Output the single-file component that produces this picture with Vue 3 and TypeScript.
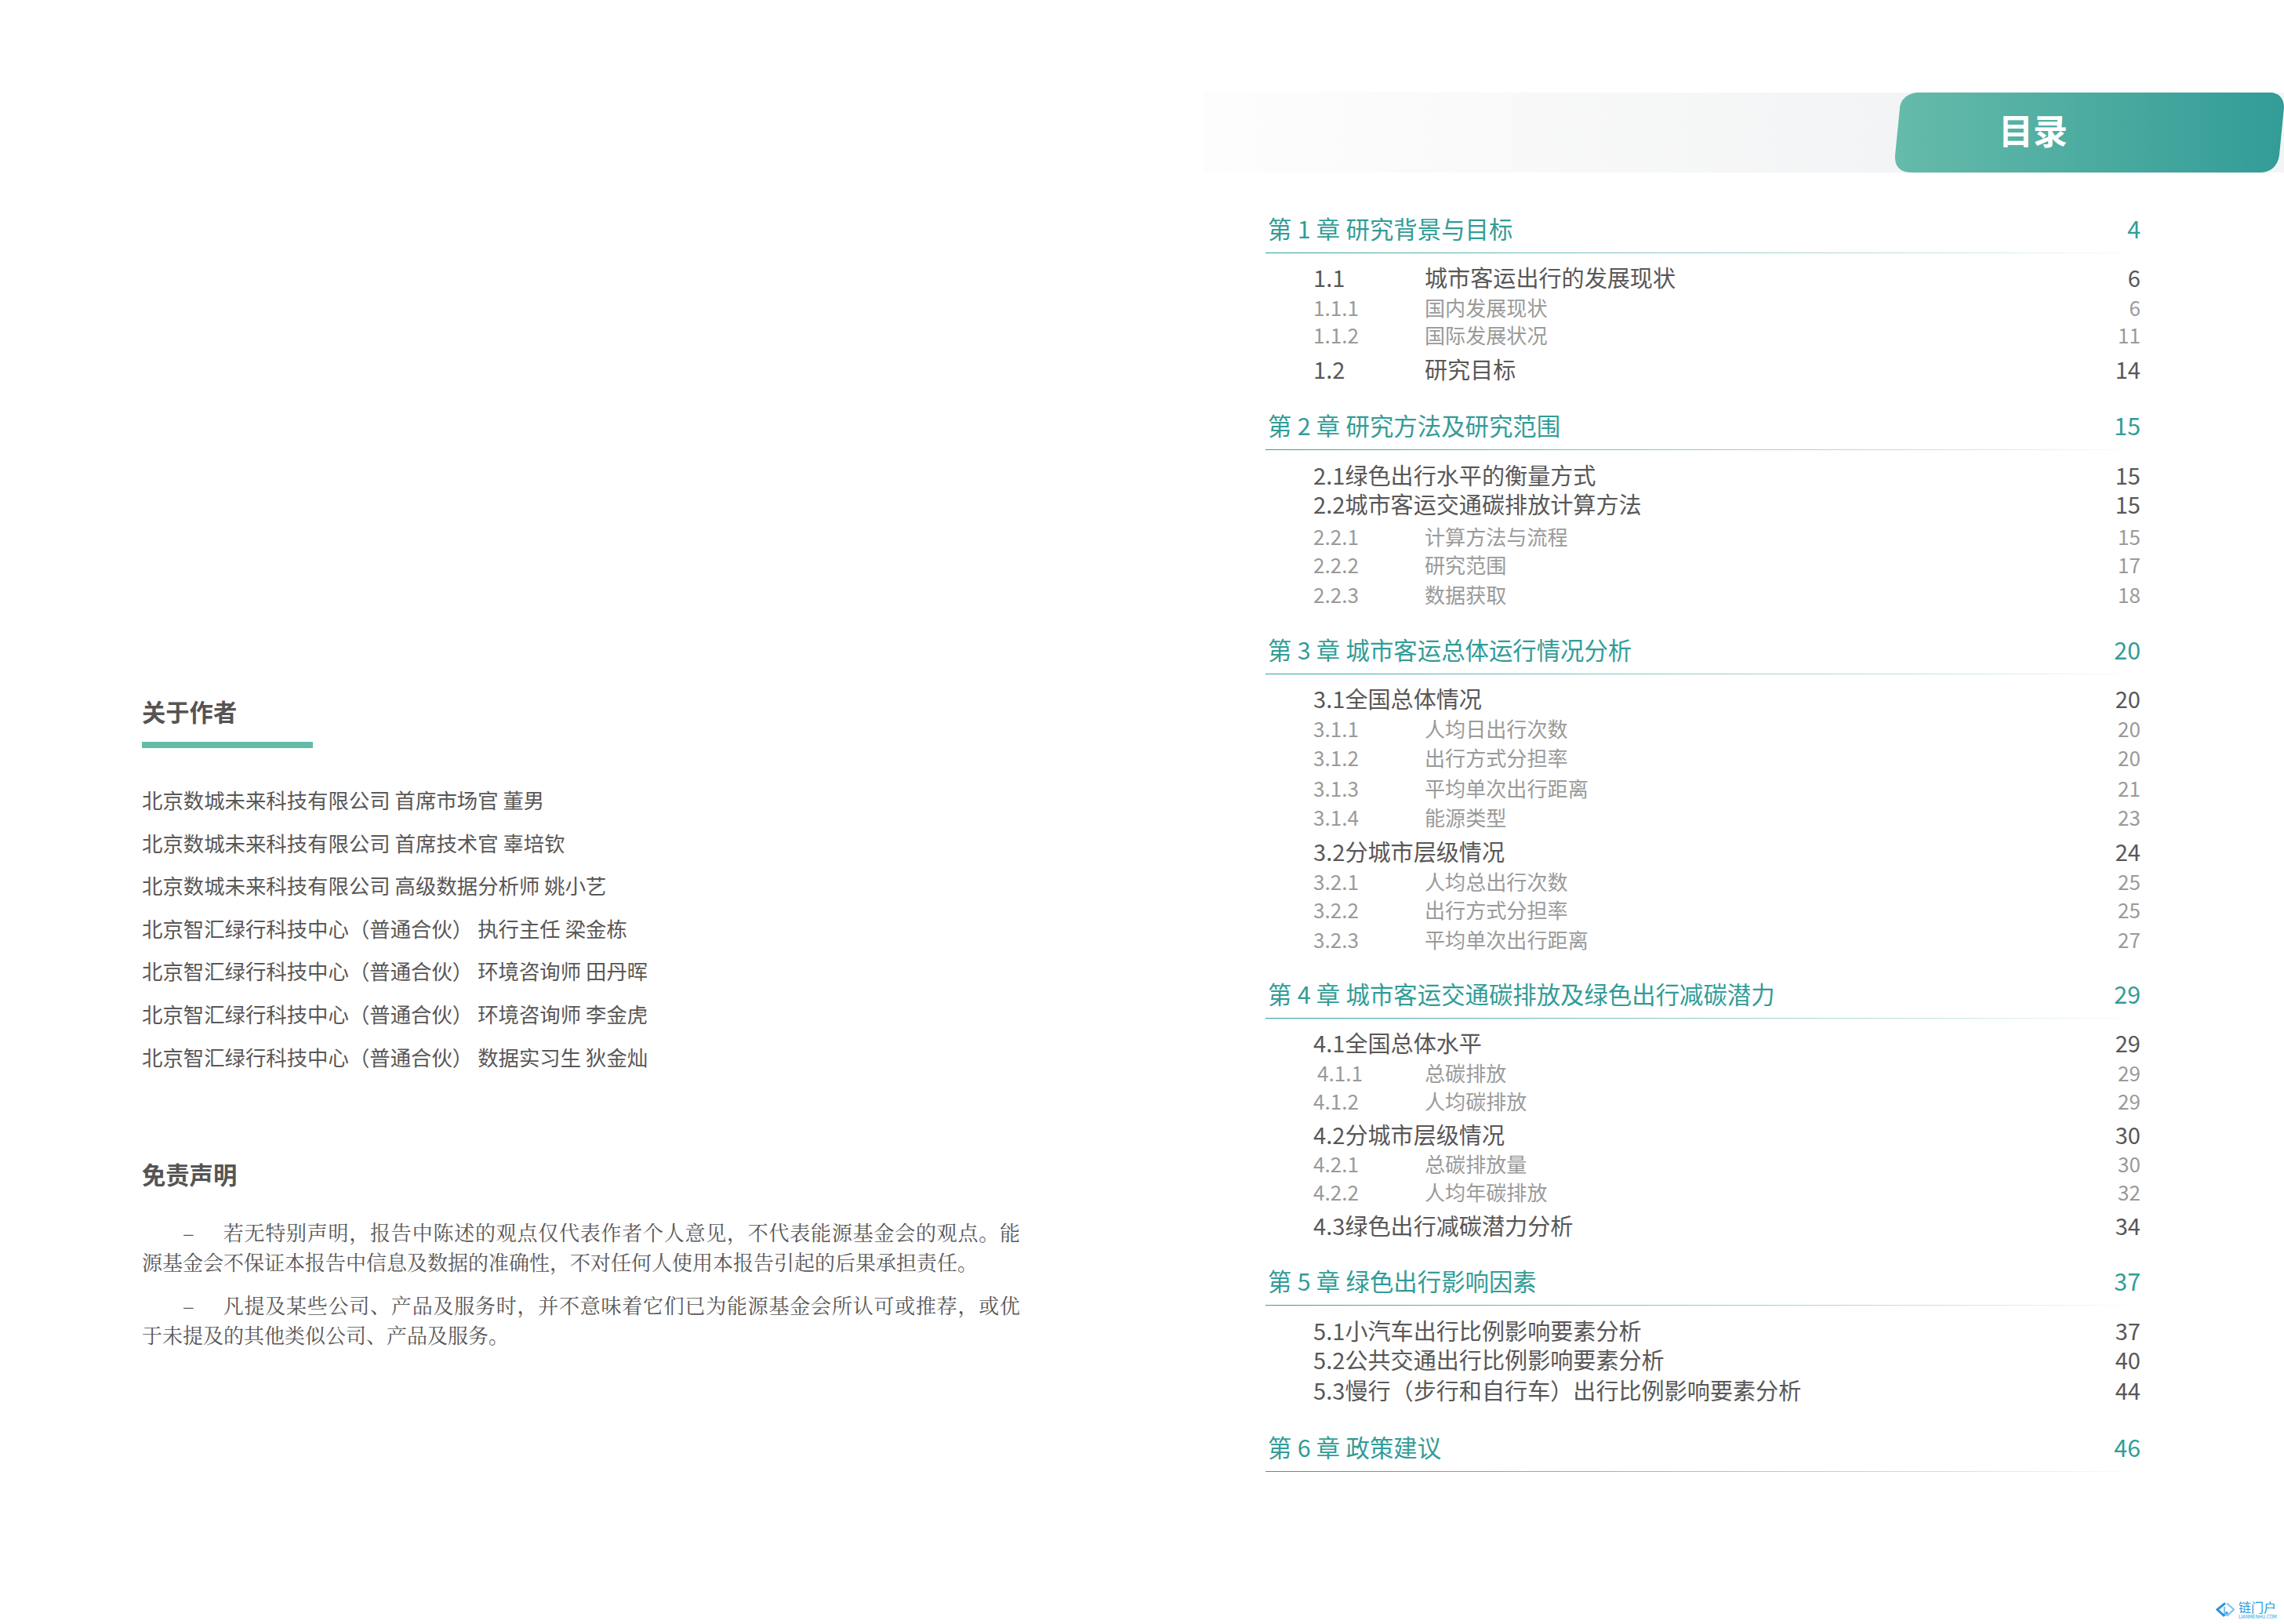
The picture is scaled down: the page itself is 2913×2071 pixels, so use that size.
<script setup lang="ts">
type Kind = 'ch' | 'sec' | 'sub'
interface Row { kind: Kind; num?: string; title: string; page: number; y: number; shift?: number }

const authors: string[] = [
  '北京数城未来科技有限公司 首席市场官 董男',
  '北京数城未来科技有限公司 首席技术官 辜培钦',
  '北京数城未来科技有限公司 高级数据分析师 姚小艺',
  '北京智汇绿行科技中心（普通合伙） 执行主任 梁金栋',
  '北京智汇绿行科技中心（普通合伙） 环境咨询师 田丹晖',
  '北京智汇绿行科技中心（普通合伙） 环境咨询师 李金虎',
  '北京智汇绿行科技中心（普通合伙） 数据实习生 狄金灿',
]

const disclaimers: [string, string][] = [
  ['若无特别声明，报告中陈述的观点仅代表作者个人意见，不代表能源基金会的观点。能', '源基金会不保证本报告中信息及数据的准确性，不对任何人使用本报告引起的后果承担责任。'],
  ['凡提及某些公司、产品及服务时，并不意味着它们已为能源基金会所认可或推荐，或优', '于未提及的其他类似公司、产品及服务。'],
]

const source: Row[] = [
  { kind: 'ch', title: '第 1 章 研究背景与目标', page: 4, y: 293.5 },
  { kind: 'sec', num: '1.1', title: '城市客运出行的发展现状', page: 6, y: 355 },
  { kind: 'sub', num: '1.1.1', title: '国内发展现状', page: 6, y: 394 },
  { kind: 'sub', num: '1.1.2', title: '国际发展状况', page: 11, y: 429 },
  { kind: 'sec', num: '1.2', title: '研究目标', page: 14, y: 472 },
  { kind: 'ch', title: '第 2 章 研究方法及研究范围', page: 15, y: 544.5 },
  { kind: 'sec', title: '2.1绿色出行水平的衡量方式', page: 15, y: 607 },
  { kind: 'sec', title: '2.2城市客运交通碳排放计算方法', page: 15, y: 644 },
  { kind: 'sub', num: '2.2.1', title: '计算方法与流程', page: 15, y: 686 },
  { kind: 'sub', num: '2.2.2', title: '研究范围', page: 17, y: 722 },
  { kind: 'sub', num: '2.2.3', title: '数据获取', page: 18, y: 760 },
  { kind: 'ch', title: '第 3 章 城市客运总体运行情况分析', page: 20, y: 830.5 },
  { kind: 'sec', title: '3.1全国总体情况', page: 20, y: 892 },
  { kind: 'sub', num: '3.1.1', title: '人均日出行次数', page: 20, y: 931 },
  { kind: 'sub', num: '3.1.2', title: '出行方式分担率', page: 20, y: 968 },
  { kind: 'sub', num: '3.1.3', title: '平均单次出行距离', page: 21, y: 1007 },
  { kind: 'sub', num: '3.1.4', title: '能源类型', page: 23, y: 1044 },
  { kind: 'sec', title: '3.2分城市层级情况', page: 24, y: 1087 },
  { kind: 'sub', num: '3.2.1', title: '人均总出行次数', page: 25, y: 1126 },
  { kind: 'sub', num: '3.2.2', title: '出行方式分担率', page: 25, y: 1162 },
  { kind: 'sub', num: '3.2.3', title: '平均单次出行距离', page: 27, y: 1200 },
  { kind: 'ch', title: '第 4 章 城市客运交通碳排放及绿色出行减碳潜力', page: 29, y: 1269 },
  { kind: 'sec', title: '4.1全国总体水平', page: 29, y: 1331 },
  { kind: 'sub', num: '4.1.1', title: '总碳排放', page: 29, y: 1370, shift: 5 },
  { kind: 'sub', num: '4.1.2', title: '人均碳排放', page: 29, y: 1406 },
  { kind: 'sec', title: '4.2分城市层级情况', page: 30, y: 1448 },
  { kind: 'sub', num: '4.2.1', title: '总碳排放量', page: 30, y: 1486 },
  { kind: 'sub', num: '4.2.2', title: '人均年碳排放', page: 32, y: 1522 },
  { kind: 'sec', title: '4.3绿色出行减碳潜力分析', page: 34, y: 1564.5 },
  { kind: 'ch', title: '第 5 章 绿色出行影响因素', page: 37, y: 1635 },
  { kind: 'sec', title: '5.1小汽车出行比例影响要素分析', page: 37, y: 1698 },
  { kind: 'sec', title: '5.2公共交通出行比例影响要素分析', page: 40, y: 1735 },
  { kind: 'sec', title: '5.3慢行（步行和自行车）出行比例影响要素分析', page: 44, y: 1774 },
  { kind: 'ch', title: '第 6 章 政策建议', page: 46, y: 1847 },
]

const ROW_H = 30
const CH_PAD = 17
const rows = source.map((r, i) => {
  const prev = source[i - 1]
  const gap = prev ? r.y - prev.y - ROW_H - (prev.kind === 'ch' ? CH_PAD : 0) : 0
  return { ...r, gap }
})
</script>

<template>
  <div class="page">
    <section class="left">
      <h2 class="about-title">关于作者</h2>
      <div class="about-bar"></div>
      <ul class="authors">
        <li v-for="a in authors" :key="a">{{ a }}</li>
      </ul>
      <h2 class="disc-title">免责声明</h2>
      <div v-for="d in disclaimers" :key="d[0]" class="disc">
        <div class="disc-first"><span class="dash">–</span>{{ d[0] }}</div>
        <div class="disc-rest">{{ d[1] }}</div>
      </div>
    </section>

    <section class="right">
      <header class="band">
        <div class="tab">
          <svg class="tab-bg" width="497" height="102" viewBox="0 0 497 102">
            <defs>
              <linearGradient id="tabGrad" gradientUnits="userSpaceOnUse" x1="0" y1="0" x2="497" y2="0">
                <stop offset="0" stop-color="#66bbaa" />
                <stop offset="1" stop-color="#329c97" />
              </linearGradient>
            </defs>
            <path d="M32 0 H479 C491 0 497 8 497 19 L491 80 C489 94 480 102 466 102 H23 C8 102 0 95 1 80 L7 20 C8 8 18 0 32 0Z" fill="url(#tabGrad)" />
          </svg>
          <h1 class="tab-title">目录</h1>
        </div>
      </header>

      <div class="toc">
        <div
          v-for="r in rows"
          :key="r.title"
          class="row"
          :class="r.kind"
          :style="{ marginTop: r.gap + 'px' }"
        >
          <span v-if="r.num" class="num" :style="{ paddingLeft: (r.shift ?? 0) + 'px' }">{{ r.num }}</span>
          <span class="name">{{ r.title }}</span>
          <span class="pg">{{ r.page }}</span>
        </div>
      </div>
    </section>

    <div class="logo">
      <svg width="25" height="19" viewBox="0 0 25 19">
        <path d="M12 1.5 L2 9.5 L10 17 L15 13" fill="none" stroke="#2a96dc" stroke-width="3" />
        <path d="M14 1.5 L23 9.5 L15 17 L11 14 L11 6" fill="none" stroke="#7cc6ee" stroke-width="2.2" />
      </svg>
      <div class="logo-text">
        <span class="logo-cn">链门户</span>
        <span class="logo-en">LIANMENHU.COM</span>
      </div>
    </div>
  </div>
</template>

<style scoped>
.page {
  position: relative;
  width: 2913px;
  height: 2071px;
  display: flex;
  background: #fff;
  overflow: hidden;
  font-family: "Noto Sans CJK SC", "Noto Sans", sans-serif;
  color: #595757;
}
.left {
  width: 1535px;
  flex: none;
  box-sizing: border-box;
  padding: 887px 0 0 181px;
}
.about-title, .disc-title {
  margin: 0;
  font-size: 30.3px;
  line-height: 40px;
  font-weight: 700;
  color: #565454;
}
.about-bar {
  width: 218px;
  height: 8px;
  margin-top: 19px;
  background: #64bbaa;
}
.authors {
  list-style: none;
  margin: 46px 0 0;
  padding: 0;
}
.authors li {
  font-size: 26.4px;
  line-height: 40px;
  height: 40px;
  margin-bottom: 14.6px;
  white-space: pre-wrap;
}
.disc-title {
  margin-top: 109px;
  margin-bottom: 35px;
}
.disc {
  width: 1120px;
  margin: 0 0 16px;
  font-family: "Noto Serif CJK SC", "Liberation Serif", "Noto Sans CJK SC", serif;
  font-size: 26px;
  line-height: 38.5px;
}
.disc-first {
  text-indent: 52px;
  text-align: justify;
  text-align-last: justify;
}
.dash {
  display: inline-block;
  width: 51px;
  text-indent: 0;
  text-align-last: left;
}
.right {
  flex: 1;
  min-width: 0;
  padding-top: 118px;
}
.band {
  height: 102px;
  display: flex;
  justify-content: flex-end;
  background: linear-gradient(90deg, #fdfdfd 0, #f3f4f5 881px);
}
.tab {
  display: grid;
  width: 497px;
  height: 102px;
}
.tab-bg, .tab-title {
  grid-area: 1 / 1;
}
.tab-title {
  margin: 0;
  padding-left: 133px;
  font-size: 44px;
  line-height: 94px;
  font-weight: 700;
  color: #fff;
}
.toc {
  width: 1118px;
  margin: 56px 0 0 79px;
}
.row {
  display: flex;
  height: 30px;
  line-height: 30px;
  white-space: pre;
}
.num {
  width: 142px;
  flex: none;
  box-sizing: border-box;
}
.name {
  flex: 1;
  min-width: 0;
}
.pg {
  flex: none;
  padding-right: 2px;
}
.ch {
  height: 47px;
  box-sizing: border-box;
  padding: 0 0 17px 3px;
  font-size: 30.4px;
  word-spacing: 0.5px;
  color: #329c97;
  background: linear-gradient(90deg, #2fa09a, rgba(47, 160, 154, 0.26) 79%, rgba(47, 160, 154, 0)) left bottom / 100% 1px no-repeat;
}
.sec {
  padding-left: 61px;
  font-size: 29.1px;
  color: #595757;
}
.sub {
  padding-left: 61px;
  font-size: 26.1px;
  color: #9a9a9a;
}
.logo {
  position: absolute;
  left: 2826px;
  top: 2040px;
  display: flex;
  align-items: center;
  gap: 4px;
  color: #2a9ae0;
}
.logo-text {
  display: flex;
  flex-direction: column;
  width: 50px;
  white-space: nowrap;
}
.logo-cn {
  font-size: 16px;
  line-height: 18px;
}
.logo-en {
  font-size: 6px;
  line-height: 7px;
}
</style>
